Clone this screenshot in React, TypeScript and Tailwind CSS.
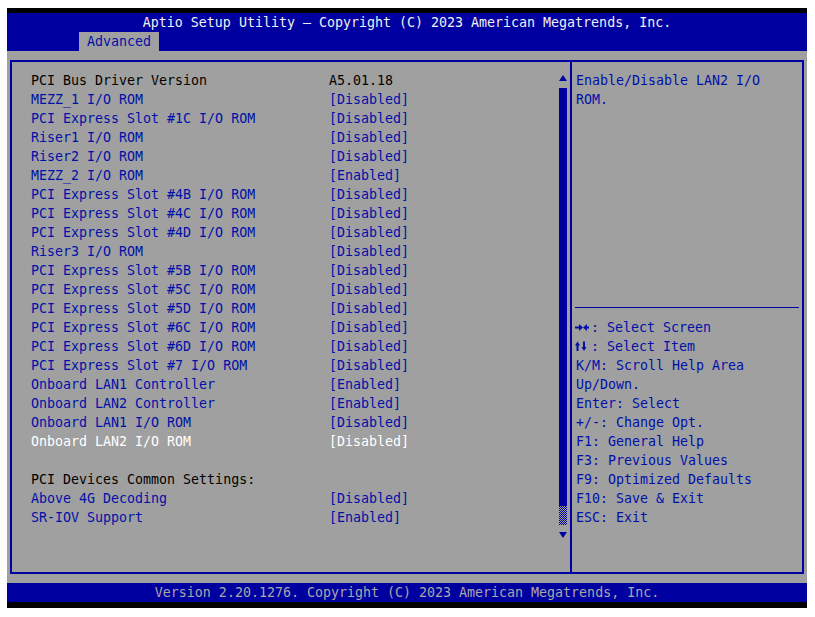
import React from "react";

const BLUE_BG = "bg-[#0000a0]";

type Row = { label: string; value: string; kind: "static" | "item" | "selected" | "blank" };

const rows: Row[] = [
  { label: "PCI Bus Driver Version", value: "A5.01.18", kind: "static" },
  { label: "MEZZ_1 I/O ROM", value: "[Disabled]", kind: "item" },
  { label: "PCI Express Slot #1C I/O ROM", value: "[Disabled]", kind: "item" },
  { label: "Riser1 I/O ROM", value: "[Disabled]", kind: "item" },
  { label: "Riser2 I/O ROM", value: "[Disabled]", kind: "item" },
  { label: "MEZZ_2 I/O ROM", value: "[Enabled]", kind: "item" },
  { label: "PCI Express Slot #4B I/O ROM", value: "[Disabled]", kind: "item" },
  { label: "PCI Express Slot #4C I/O ROM", value: "[Disabled]", kind: "item" },
  { label: "PCI Express Slot #4D I/O ROM", value: "[Disabled]", kind: "item" },
  { label: "Riser3 I/O ROM", value: "[Disabled]", kind: "item" },
  { label: "PCI Express Slot #5B I/O ROM", value: "[Disabled]", kind: "item" },
  { label: "PCI Express Slot #5C I/O ROM", value: "[Disabled]", kind: "item" },
  { label: "PCI Express Slot #5D I/O ROM", value: "[Disabled]", kind: "item" },
  { label: "PCI Express Slot #6C I/O ROM", value: "[Disabled]", kind: "item" },
  { label: "PCI Express Slot #6D I/O ROM", value: "[Disabled]", kind: "item" },
  { label: "PCI Express Slot #7 I/O ROM", value: "[Disabled]", kind: "item" },
  { label: "Onboard LAN1 Controller", value: "[Enabled]", kind: "item" },
  { label: "Onboard LAN2 Controller", value: "[Enabled]", kind: "item" },
  { label: "Onboard LAN1 I/O ROM", value: "[Disabled]", kind: "item" },
  { label: "Onboard LAN2 I/O ROM", value: "[Disabled]", kind: "selected" },
  { label: "", value: "", kind: "blank" },
  { label: "PCI Devices Common Settings:", value: "", kind: "static" },
  { label: "Above 4G Decoding", value: "[Disabled]", kind: "item" },
  { label: "SR-IOV Support", value: "[Enabled]", kind: "item" },
];

const keys: { k: string; rest: string }[] = [
  { k: "K/M", rest: ": Scroll Help Area" },
  { k: "Up/Down.", rest: "" },
  { k: "Enter", rest: ": Select" },
  { k: "+/-", rest: ": Change Opt." },
  { k: "F1", rest: ": General Help" },
  { k: "F3", rest: ": Previous Values" },
  { k: "F9", rest: ": Optimized Defaults" },
  { k: "F10", rest: ": Save & Exit" },
  { k: "ESC", rest: ": Exit" },
];

function colorFor(kind: Row["kind"]) {
  if (kind === "static") return "text-[#000000]";
  if (kind === "selected") return "text-[#ffffff]";
  return "text-[#0010a8]";
}

function LeftRightArrows() {
  return (
    <svg width="16" height="19" viewBox="0 0 16 19" className="inline-block align-top" aria-label="→←">
      <rect x="0" y="8.5" width="5" height="2" fill="#0010a8" />
      <polygon points="4,6 8,9.5 4,13" fill="#0010a8" />
      <polygon points="12,6 8,9.5 12,13" fill="#0010a8" />
      <rect x="11" y="8.5" width="3" height="2" fill="#0010a8" />
    </svg>
  );
}

function UpDownArrows() {
  return (
    <svg width="16" height="19" viewBox="0 0 16 19" className="inline-block align-top" aria-label="↑↓">
      <polygon points="0,8.5 2.5,4.5 5,8.5" fill="#0010a8" />
      <rect x="1.5" y="8" width="2" height="6" fill="#0010a8" />
      <rect x="8" y="4.5" width="2" height="6" fill="#0010a8" />
      <polygon points="6.5,10 9,14 11.5,10" fill="#0010a8" />
    </svg>
  );
}

export default function App() {
  return (
    <div className="w-[815px] h-[617px] bg-white pt-[8px] pl-[7px]">
      <div className="w-[800px] h-[600px] flex flex-col bg-[#a0a0a0] font-['DejaVu_Sans_Mono',monospace] text-[13.3px] leading-[19px] whitespace-pre">
        <div className="h-[5px] bg-black" />
        <div className={`h-[19px] ${BLUE_BG} text-center text-[#f0f0f0]`}>
          Aptio Setup Utility – Copyright (C) 2023 American Megatrends, Inc.
        </div>
        <div className={`h-[19px] ${BLUE_BG} flex pl-[72px]`}>
          <div className="bg-[#a0a0a0] px-[8px] text-[#0010a8]">Advanced</div>
        </div>
        <div className="flex-1 px-[3px] py-[9px] flex">
          <div className="flex-1 flex border-2 border-[#0000a0]">
            {/* left panel */}
            <div className="flex-1 flex">
              <div className="flex-1 pl-[19px] pt-[9px] flex flex-col">
                {rows.map((r, i) => (
                  <div key={i} className={`h-[19px] flex ${colorFor(r.kind)}`}>
                    <div className="w-[298px]">{r.label}</div>
                    <div>{r.value}</div>
                  </div>
                ))}
              </div>
              {/* scrollbar */}
              <div className="w-[8px] mr-[3px] pt-[13px] flex flex-col">
                <svg width="8" height="6" viewBox="0 0 8 6" className="block">
                  <polygon points="4,0 8,6 0,6" fill="#0000a0" />
                </svg>
                <div className="h-[7px]" />
                <div className="h-[418px] bg-[#0000a0]" />
                <svg width="8" height="19" className="block">
                  <defs>
                    <pattern id="dots" width="2" height="2" patternUnits="userSpaceOnUse">
                      <rect x="0" y="0" width="1" height="1" fill="#0000a0" />
                      <rect x="1" y="1" width="1" height="1" fill="#0000a0" />
                    </pattern>
                  </defs>
                  <rect x="0" y="0" width="8" height="19" fill="url(#dots)" />
                </svg>
                <div className="h-[7px]" />
                <svg width="8" height="6" viewBox="0 0 8 6" className="block">
                  <polygon points="0,0 8,0 4,6" fill="#0000a0" />
                </svg>
              </div>
            </div>
            <div className="w-[2px] bg-[#0000a0]" />
            {/* right panel */}
            <div className="w-[230px] flex flex-col text-[#0010a8]">
              <div className="h-[245px] pl-[4px] pt-[9px]">
                <div>Enable/Disable LAN2 I/O</div>
                <div>ROM.</div>
              </div>
              <div className="h-[1px] mx-[3px] bg-[#0000a0]" />
              <div className="pl-[3px] pt-[10px]">
                <div className="h-[19px]">
                  <LeftRightArrows />
                  <span>: Select Screen</span>
                </div>
                <div className="h-[19px]">
                  <UpDownArrows />
                  <span>: Select Item</span>
                </div>
                {keys.map((k, i) => (
                  <div key={i} className="h-[19px] pl-[1px]">
                    {k.k}
                    {k.rest}
                  </div>
                ))}
              </div>
            </div>
          </div>
        </div>
        <div className={`h-[19px] ${BLUE_BG} text-center text-[#a8a8a8]`}>
          Version 2.20.1276. Copyright (C) 2023 American Megatrends, Inc.
        </div>
        <div className="h-[6px] bg-black" />
      </div>
    </div>
  );
}
